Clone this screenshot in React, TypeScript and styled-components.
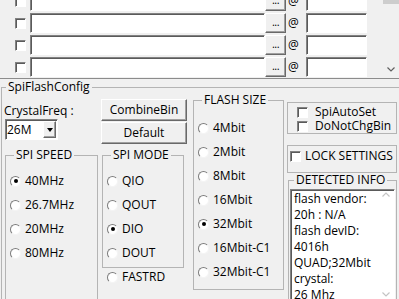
import styled, { createGlobalStyle, css } from "styled-components";

const GlobalStyle = createGlobalStyle`
  html, body {
    margin: 0;
    padding: 0;
  }
  body {
    background: #f0f0f0;
    font-family: "Open Sans", "Noto Sans", Arial, sans-serif;
    font-size: 12px;
    line-height: 16px;
    color: #000;
  }
  * {
    box-sizing: border-box;
  }
`

const sunken = css`
  background: #fff;
  border: 1px solid;
  border-color: #828282 #fff #fff #828282;
  box-shadow: inset 1px 1px 0 #5a5a5a;
`

const raised = css`
  background: #f0f0f0;
  border: 1px solid;
  border-color: #fff #696969 #696969 #fff;
  box-shadow: inset -1px -1px 0 #a0a0a0;
`

const Window = styled.div`
  width: 399px;
  height: 299px;
  overflow: hidden;
  background: #f0f0f0;
  display: flex;
  flex-direction: column;
`

/* ---------- file list ---------- */

const FileList = styled.div`
  flex: none;
  height: 79px;
  display: flex;
  border-bottom: 1px solid #8c8c8c;
`

const ListViewport = styled.div`
  flex: 1;
  overflow: hidden;
`

const ListRows = styled.div`
  display: flex;
  flex-direction: column;
  gap: 2px;
  margin-top: -9px;
`

const FileRow = styled.div`
  flex: none;
  height: 20px;
  display: flex;
  align-items: center;
  padding-left: 15px;
`

const CheckBox = styled.span`
  ${sunken};
  flex: none;
  width: 11px;
  height: 11px;
`

const PathField = styled.div`
  ${sunken};
  width: 235px;
  height: 20px;
  margin-left: 4px;
`

const BrowseButton = styled.div`
  ${raised};
  width: 21px;
  height: 20px;
  font-size: 11px;
  line-height: 15px;
  text-align: center;
  letter-spacing: -0.5px;
`

const AtSign = styled.span`
  width: 20px;
  padding-left: 2px;
`

const AddrField = styled.div`
  ${sunken};
  width: 61px;
  height: 20px;
`

const ListScroll = styled.div`
  flex: none;
  width: 16px;
  display: flex;
  flex-direction: column;
`

const ScrollThumb = styled.div`
  height: 4px;
  background: #cdcdcd;
`

const ScrollTrack = styled.div`
  flex: 1;
`

const ScrollArrow = styled.div`
  height: 17px;
  display: grid;
  place-items: center;
`

/* ---------- config ---------- */

const Group = styled.fieldset`
  margin: 0;
  padding: 0;
  min-width: 0;
  border: 1px solid #b4b4b4;
`

const Legend = styled.legend`
  margin-left: 4px;
  padding: 0 2px;
  line-height: 10px;
`

const ConfigGroup = styled(Group)`
  flex: none;
  margin: 3px -3px 0 1px;
`

const ConfigColumns = styled.div`
  display: grid;
  grid-template-columns: 95px 90px 92px 110px;
  column-gap: 2px;
  padding-left: 2px;
  align-items: start;
`

const Column = styled.div`
  display: flex;
  flex-direction: column;
  align-items: flex-start;
`

const FieldLabel = styled.div`
  margin-top: 11px;
`

const Combo = styled.div`
  ${sunken};
  width: 53px;
  height: 21px;
  margin-left: 1px;
  padding: 1px;
  display: flex;
`

const ComboText = styled.span`
  flex: 1;
  line-height: 17px;
`

const ComboButton = styled.span`
  ${raised};
  width: 13px;
  display: grid;
  place-items: center;

  &::after {
    content: "";
    border-left: 3.5px solid transparent;
    border-right: 3.5px solid transparent;
    border-top: 4px solid #000;
  }
`

const PushButton = styled.div`
  ${raised};
  width: 86px;
  height: 22px;
  display: grid;
  place-items: center;
`

const ButtonStack = styled.div`
  margin-top: 7px;
  display: flex;
  flex-direction: column;
  gap: 1px;
`

const SpeedGroup = styled(Group)`
  margin: 10px 0 0 1px;
  width: 93px;
  padding: 9px 0 40px 4px;
`

const ModeGroup = styled(Group)`
  margin: 6px 0 0 1px;
  width: 82px;
  padding: 9px 0 2px 4px;
`

const SizeGroup = styled(Group)`
  margin-top: 3px;
  width: 91px;
  padding: 11px 0 5px 4px;
`

const RadioRow = styled.div<{ $short?: boolean }>`
  height: ${({$short}) => $short ? 18 : 24}px;
  display: flex;
  align-items: center;
  gap: 4px;
  padding-left: ${({$short}) => $short ? 6 : 0}px;
`

const RadioMark = styled.span<{ $checked?: boolean }>`
  flex: none;
  width: 11px;
  height: 11px;
  border-radius: 50%;
  background: #fff;
  border: 1px solid;
  border-color: #7c7c7c #f4f4f4 #f4f4f4 #7c7c7c;
  display: grid;
  place-items: center;

  &::after {
    content: "";
    width: 4px;
    height: 4px;
    border-radius: 50%;
    background: ${({$checked}) => $checked ? "#000" : "transparent"};
  }
`

const OptionsBox = styled.div`
  margin-top: 10px;
  width: 110px;
  height: 32px;
  padding: 2px 0 0 9px;
  border: 1px solid #b4b4b4;
`

const LockBox = styled.div`
  margin-top: 11px;
  width: 110px;
  height: 28px;
  padding: 3px 0 0 2px;
  border: 1px solid #b4b4b4;
`

const CheckRow = styled.div<{ $gap: number }>`
  height: 14px;
  line-height: 14px;
  display: flex;
  align-items: center;
  gap: ${({$gap}) => $gap}px;
`

const InfoGroup = styled(Group)`
  margin: 2px 0 0 1px;
  width: 109px;
  padding: 4px 0 0 1px;
`

const InfoList = styled.div`
  ${sunken};
  width: 105px;
  height: 112px;
  display: flex;
  overflow: hidden;
`

const InfoLines = styled.div`
  flex: 1;
  padding: 1px 0 0 3px;
  white-space: nowrap;
`

const InfoScroll = styled.div`
  flex: none;
  width: 16px;
  display: flex;
  flex-direction: column;
  justify-content: space-between;
  align-items: center;
  padding: 2px 0 3px;
`

const Chevron = ({up, color}: { up?: boolean; color: string }) => (
    <svg width="8" height="5" viewBox="0 0 8 5">
        <path d={up ? "M0.5 4.5 L4 1 L7.5 4.5" : "M0.5 0.5 L4 4 L7.5 0.5"} fill="none" stroke={color}
              strokeWidth="1.2"/>
    </svg>
)

const SPEEDS = [["40MHz", true], ["26.7MHz", false], ["20MHz", false], ["80MHz", false]] as const
const MODES = [["QIO", false], ["QOUT", false], ["DIO", true], ["DOUT", false]] as const
const SIZES = [
    ["4Mbit", false], ["2Mbit", false], ["8Mbit", false], ["16Mbit", false],
    ["32Mbit", true], ["16Mbit-C1", false], ["32Mbit-C1", false],
] as const
const INFO = ["flash vendor:", "20h : N/A", "flash devID:", "4016h", "QUAD;32Mbit", "crystal:", "26 Mhz"]

export default function App() {
    return (
        <>
            <GlobalStyle/>
            <Window>
                <FileList>
                    <ListViewport>
                        <ListRows>
                            {[0, 1, 2, 3].map((i) => (
                                <FileRow key={i}>
                                    <CheckBox/>
                                    <PathField/>
                                    <BrowseButton>...</BrowseButton>
                                    <AtSign>@</AtSign>
                                    <AddrField/>
                                </FileRow>
                            ))}
                        </ListRows>
                    </ListViewport>
                    <ListScroll>
                        <ScrollThumb/>
                        <ScrollTrack/>
                        <ScrollArrow><Chevron color="#606060"/></ScrollArrow>
                    </ListScroll>
                </FileList>

                <ConfigGroup>
                    <Legend>SpiFlashConfig</Legend>
                    <ConfigColumns>
                        <Column>
                            <FieldLabel>CrystalFreq :</FieldLabel>
                            <Combo>
                                <ComboText>26M</ComboText>
                                <ComboButton/>
                            </Combo>
                            <SpeedGroup>
                                <Legend>SPI SPEED</Legend>
                                {SPEEDS.map(([label, on]) => (
                                    <RadioRow key={label}><RadioMark $checked={on}/>{label}</RadioRow>
                                ))}
                            </SpeedGroup>
                        </Column>

                        <Column>
                            <ButtonStack>
                                <PushButton>CombineBin</PushButton>
                                <PushButton>Default</PushButton>
                            </ButtonStack>
                            <ModeGroup>
                                <Legend>SPI MODE</Legend>
                                {MODES.map(([label, on]) => (
                                    <RadioRow key={label}><RadioMark $checked={on}/>{label}</RadioRow>
                                ))}
                            </ModeGroup>
                            <RadioRow $short><RadioMark/>FASTRD</RadioRow>
                        </Column>

                        <Column>
                            <SizeGroup>
                                <Legend>FLASH SIZE</Legend>
                                {SIZES.map(([label, on]) => (
                                    <RadioRow key={label}><RadioMark $checked={on}/>{label}</RadioRow>
                                ))}
                            </SizeGroup>
                        </Column>

                        <Column>
                            <OptionsBox>
                                <CheckRow $gap={7}><CheckBox/>SpiAutoSet</CheckRow>
                                <CheckRow $gap={7}><CheckBox/>DoNotChgBin</CheckRow>
                            </OptionsBox>
                            <LockBox>
                                <CheckRow $gap={4}><CheckBox/>LOCK SETTINGS</CheckRow>
                            </LockBox>
                            <InfoGroup>
                                <Legend>DETECTED INFO</Legend>
                                <InfoList>
                                    <InfoLines>
                                        {INFO.map((line) => <div key={line}>{line}</div>)}
                                    </InfoLines>
                                    <InfoScroll>
                                        <Chevron up color="#c4c4c4"/>
                                        <Chevron color="#c4c4c4"/>
                                    </InfoScroll>
                                </InfoList>
                            </InfoGroup>
                        </Column>
                    </ConfigColumns>
                </ConfigGroup>
            </Window>
        </>
    )
}
